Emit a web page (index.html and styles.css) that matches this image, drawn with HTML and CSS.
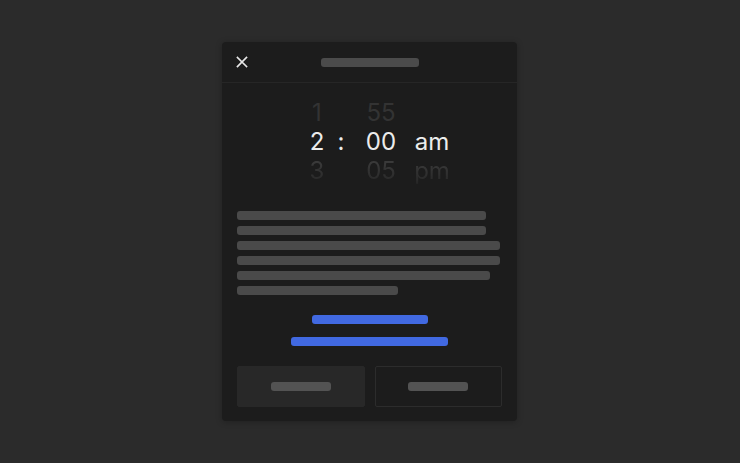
FILE: index.html
```html
<!DOCTYPE html>
<html>
<head>
<meta charset="utf-8">
<link rel="stylesheet" href="styles.css">
</head>
<body>
<div class="page">
  <div class="card">
    <div class="header">
      <button class="close" aria-label="Close">
        <svg width="12" height="12" viewBox="0 0 12 12"><path d="M1.5 1.5 L10.5 10.5 M10.5 1.5 L1.5 10.5" stroke="#e8e8e8" stroke-width="1.7" stroke-linecap="square"/></svg>
      </button>
      <div class="title-bar"></div>
    </div>
    <div class="picker">
      <div class="prow dim-top">
        <span class="c-h">1</span><span class="c-sep"></span><span class="c-m">55</span><span class="c-ap"></span>
      </div>
      <div class="prow active">
        <span class="c-h">2</span><span class="c-sep">:</span><span class="c-m">00</span><span class="c-ap">am</span>
      </div>
      <div class="prow dim-bottom">
        <span class="c-h">3</span><span class="c-sep"></span><span class="c-m">05</span><span class="c-ap">pm</span>
      </div>
    </div>
    <div class="text-block">
      <div class="line w249"></div>
      <div class="line w249"></div>
      <div class="line w263"></div>
      <div class="line w263"></div>
      <div class="line w253"></div>
      <div class="line w161"></div>
    </div>
    <div class="links">
      <div class="link w116"></div>
      <div class="link w157"></div>
    </div>
    <div class="actions">
      <button class="btn btn-filled"><span class="btn-label"></span></button>
      <button class="btn btn-outline"><span class="btn-label"></span></button>
    </div>
  </div>
</div>
</body>
</html>
```
FILE: styles.css
```css
* { box-sizing: border-box; }
html, body { margin: 0; padding: 0; }
body {
  background: #2b2b2b;
  font-family: "Inter", "Liberation Sans", Arial, sans-serif;
  width: 740px;
  height: 463px;
  overflow: hidden;
}
.page {
  display: flex;
  justify-content: center;
  padding-top: 42px;
  padding-right: 1px;
}
.card {
  width: 295px;
  height: 379px;
  background: #1c1c1c;
  border-radius: 4px;
  box-shadow: 0 1px 6px rgba(0,0,0,0.25);
  display: flex;
  flex-direction: column;
}
.header {
  height: 41px;
  border-bottom: 1px solid #262626;
  display: flex;
  align-items: center;
  position: relative;
  justify-content: center;
}
.close {
  position: absolute;
  left: 14px;
  top: 14px;
  width: 12px;
  height: 12px;
  padding: 0;
  border: 0;
  background: none;
  display: flex;
}
.title-bar {
  width: 98px;
  height: 9px;
  border-radius: 3px;
  background: #4b4b4b;
}
.picker {
  padding-top: 15px;
  display: flex;
  flex-direction: column;
  align-items: center;
  padding-left: 15px;
}
.prow {
  display: flex;
  height: 29px;
  align-items: center;
  font-size: 24px;
  font-weight: 400;
  line-height: 29px;
}
.prow span { text-align: center; display: block; }
.c-h { width: 30px; }
.c-sep { width: 18px; }
.c-m { width: 40px; margin-left: 11px; }
.c-ap { width: 40px; margin-left: 11px; }
.active { color: #ececec; }
.dim-top { color: #333333; }
.dim-bottom {
  color: #3c3c3c;
  -webkit-mask-image: linear-gradient(to bottom, rgba(0,0,0,1) 15%, rgba(0,0,0,0.3) 100%);
  mask-image: linear-gradient(to bottom, rgba(0,0,0,1) 15%, rgba(0,0,0,0.3) 100%);
}
.text-block {
  margin-top: 26px;
  padding: 0 15px;
  display: flex;
  flex-direction: column;
  gap: 6px;
}
.line {
  height: 9px;
  border-radius: 3px;
  background: #4a4a4a;
}
.w249 { width: 249px; }
.w263 { width: 263px; }
.w253 { width: 253px; }
.w161 { width: 161px; }
.links {
  margin-top: 20px;
  display: flex;
  flex-direction: column;
  align-items: center;
  gap: 13px;
}
.link {
  height: 9px;
  border-radius: 3px;
  background: #4169e1;
}
.w116 { width: 116px; }
.w157 { width: 157px; }
.links .w116 { margin-left: 1px; }
.actions {
  margin-top: 20px;
  padding: 0 15px;
  display: flex;
  gap: 10px;
}
.btn {
  flex: 1;
  height: 41px;
  border-radius: 2px;
  display: flex;
  align-items: center;
  justify-content: center;
  padding: 0;
}
.btn-filled {
  background: #282828;
  border: 1px solid #282828;
}
.btn-outline {
  background: transparent;
  border: 1px solid #2c2c2c;
}
.btn-label {
  width: 60px;
  height: 9px;
  border-radius: 3px;
  background: #535353;
}
```
